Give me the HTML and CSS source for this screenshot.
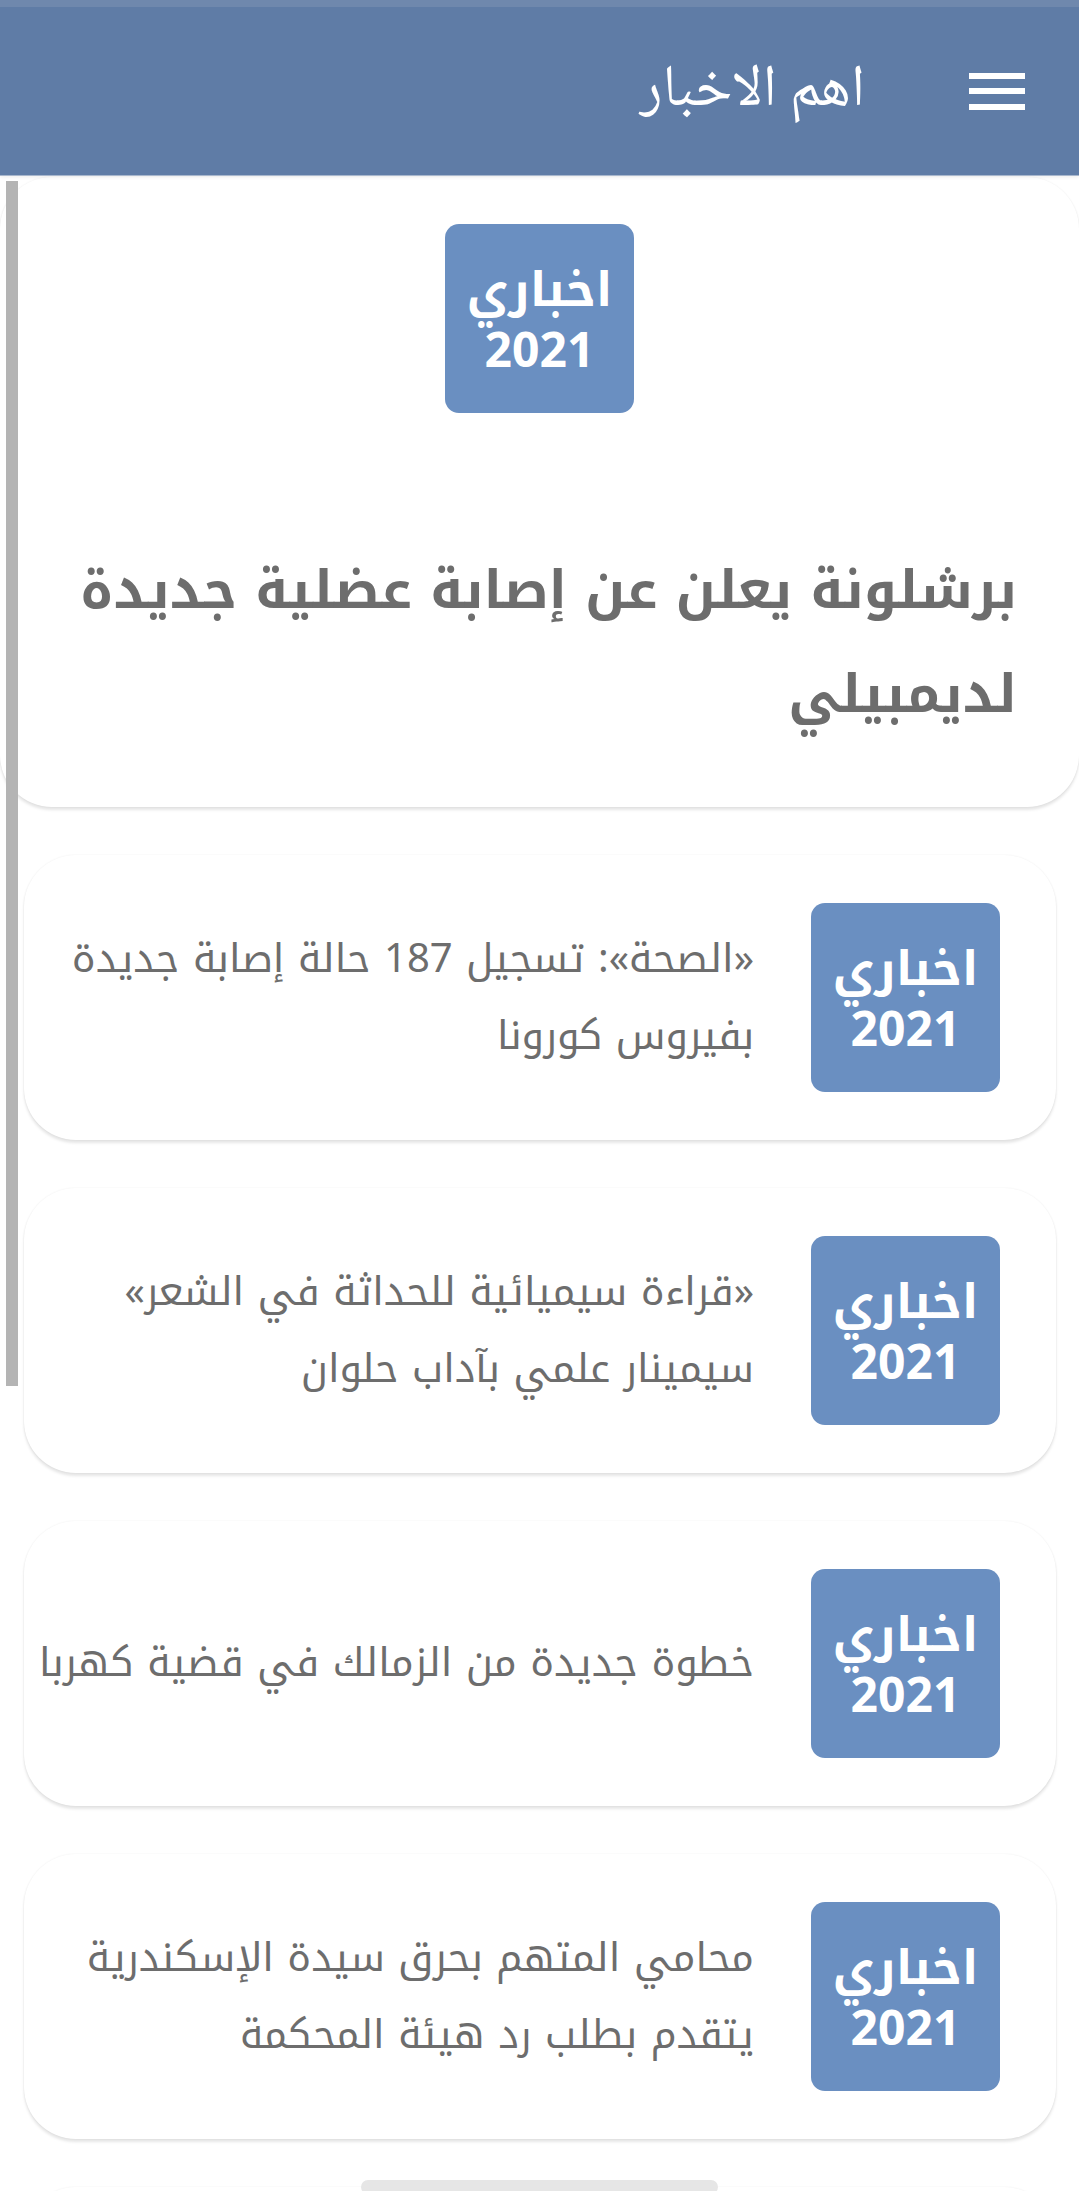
FILE: index.html
```html
<!DOCTYPE html>
<html lang="ar" dir="rtl">
<head>
<meta charset="utf-8">
<title>اهم الاخبار</title>
<link rel="stylesheet" href="styles.css">
</head>
<body>
<header class="app-bar">
  <button class="menu-btn" aria-label="menu">
    <span class="bar"></span><span class="bar"></span><span class="bar"></span>
  </button>
  <h1 class="app-title">اهم الاخبار</h1>
</header>

<main class="feed">
  <article class="card card-featured">
    <div class="thumb">
      <span class="thumb-word">اخباري</span>
      <span class="thumb-year">2021</span>
    </div>
    <h2 class="featured-title">برشلونة يعلن عن إصابة عضلية جديدة لديمبيلي</h2>
  </article>

  <article class="card card-row">
    <div class="thumb">
      <span class="thumb-word">اخباري</span>
      <span class="thumb-year">2021</span>
    </div>
    <p class="row-title">«الصحة»: تسجيل 187 حالة إصابة جديدة<br>بفيروس كورونا</p>
  </article>

  <article class="card card-row">
    <div class="thumb">
      <span class="thumb-word">اخباري</span>
      <span class="thumb-year">2021</span>
    </div>
    <p class="row-title">«قراءة سيميائية للحداثة في الشعر»<br>سيمينار علمي بآداب حلوان</p>
  </article>

  <article class="card card-row">
    <div class="thumb">
      <span class="thumb-word">اخباري</span>
      <span class="thumb-year">2021</span>
    </div>
    <p class="row-title">خطوة جديدة من الزمالك في قضية كهربا</p>
  </article>

  <article class="card card-row">
    <div class="thumb">
      <span class="thumb-word">اخباري</span>
      <span class="thumb-year">2021</span>
    </div>
    <p class="row-title">محامي المتهم بحرق سيدة الإسكندرية<br>يتقدم بطلب رد هيئة المحكمة</p>
  </article>

  <article class="card card-row" aria-hidden="true"></article>
</main>

<div class="scroll-thumb"></div>
<div class="home-pill"></div>
</body>
</html>
```
FILE: styles.css
```css
* { box-sizing: border-box; }

html, body {
  margin: 0;
  padding: 0;
  background: #ffffff;
}

body {
  font-family: "Noto Kufi Arabic", "Noto Sans Arabic", "DejaVu Sans", sans-serif;
  overflow: hidden;
}

/* ---------- app bar ---------- */
.app-bar {
  height: 175px;
  background: #5f7ca6;
  border-top: 7px solid #6f88ad;
  display: flex;
  align-items: center;
  padding-right: 54px;
  gap: 104px;
  box-shadow: 0 1px 0 #a8b7cd, 0 2px 4px rgba(0, 0, 0, 0.08);
  position: relative;
  z-index: 2;
}

.menu-btn {
  width: 56px;
  height: 37px;
  padding: 0;
  border: 0;
  background: none;
  display: flex;
  flex-direction: column;
  justify-content: space-between;
}

.menu-btn .bar {
  display: block;
  width: 56px;
  height: 6px;
  background: #ffffff;
}

.app-title {
  margin: 0;
  color: #ffffff;
  font-family: "Noto Naskh Arabic", "Noto Sans Arabic", "DejaVu Sans", sans-serif;
  font-weight: 400;
  font-size: 59px;
  line-height: 1;
  padding-top: 2px;
}

/* ---------- feed ---------- */
.feed {
  display: flex;
  flex-direction: column;
  gap: 48px;
  padding-top: 2px;
}

.card {
  background: #ffffff;
  border-radius: 52px;
  box-shadow: 0 3px 3px rgba(0, 0, 0, 0.10), 0 0 2px rgba(0, 0, 0, 0.07);
}

/* thumbnail badge */
.thumb {
  flex: none;
  width: 189px;
  height: 189px;
  border-radius: 14px;
  background: #6a8fc1;
  color: #ffffff;
  display: flex;
  flex-direction: column;
  align-items: center;
  justify-content: center;
  gap: 8px;
  padding-bottom: 2px;
}

.thumb-word {
  font-family: "Liberation Sans", "Noto Kufi Arabic", "DejaVu Sans", sans-serif;
  font-weight: 700;
  font-size: 48px;
  line-height: 54px;
}

.thumb-year {
  font-family: "Open Sans", "DejaVu Sans", sans-serif;
  font-weight: 700;
  font-size: 48px;
  line-height: 48px;
}

/* featured card */
.card-featured {
  height: 630px;
  margin: 0;
  padding: 47px 62px 0 62px;
  display: flex;
  flex-direction: column;
  align-items: center;
}

.featured-title {
  align-self: stretch;
  margin: 126px 0 0;
  color: #6d6d6d;
  font-weight: 700;
  font-size: 53px;
  line-height: 104px;
  text-align: right;
}

/* row cards */
.card-row {
  height: 285px;
  margin: 0 23px 0 24px;
  padding: 0 56px 0 4px;
  display: flex;
  align-items: center;
  gap: 57px;
}

.row-title {
  flex: 1;
  margin: 0;
  color: #6d6d6d;
  font-weight: 400;
  font-size: 40px;
  line-height: 77px;
}

/* overlays */
.scroll-thumb {
  position: fixed;
  left: 6px;
  top: 181px;
  width: 12px;
  height: 1205px;
  background: #b4b4b4;
  z-index: 3;
}

.home-pill {
  position: fixed;
  left: 361px;
  top: 2180px;
  width: 357px;
  height: 14px;
  border-radius: 7px;
  background: #e6e6e6;
  z-index: 3;
}
```
